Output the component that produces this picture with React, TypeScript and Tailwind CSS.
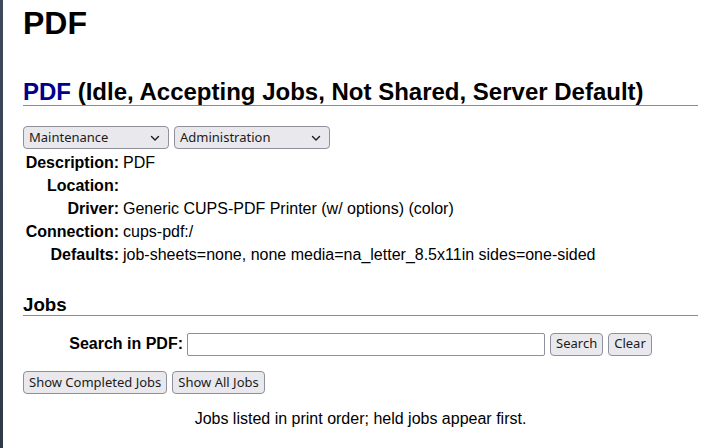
import React from "react";

const ctl = "font-['Noto_Sans',sans-serif] text-[13px] text-[#1b1b1b] bg-[#e9e9ed] border border-[#8f8f9d] rounded-[4px]";

function Select({ label, w }: { label: string; w: string }) {
  return (
    <div className={`${ctl} ${w} h-[23px] flex items-center justify-between pl-[5px] pr-[8px]`}>
      <span>{label}</span>
      <svg width="10" height="10" viewBox="0 0 10 10" fill="none">
        <path d="M1.5 3.5 L5 7 L8.5 3.5" stroke="#1b1b1b" strokeWidth="1.4" strokeLinecap="round" strokeLinejoin="round" />
      </svg>
    </div>
  );
}

function Btn({ label }: { label: string }) {
  return (
    <div className={`${ctl} h-[23px] flex items-center px-[5px] whitespace-nowrap`}>{label}</div>
  );
}

function Row({ k, v }: { k: string; v: string }) {
  return (
    <div className="flex h-[23px] items-center">
      <div className="w-[96px] text-right font-bold">{k}</div>
      <div className="pl-[4px]">{v}</div>
    </div>
  );
}

export default function App() {
  return (
    <div className="flex min-h-[448px] bg-white font-['Liberation_Sans',Arial,sans-serif] text-[16px] text-black">
      <div className="w-[3px] shrink-0 bg-gradient-to-b from-[#3e4a5a] to-[#2f3a48]" />
      <div className="flex-1 pl-[20px] pr-[9px]">
        <h1 className="text-[32px] font-bold leading-[37px] mt-[5px]">PDF</h1>
        <h2 className="mt-[36px] text-[24px] font-bold leading-[27px] border-b border-[#8c8c8c]">
          <span className="text-[#00008b]">PDF</span> (Idle, Accepting Jobs, Not Shared, Server Default)
        </h2>
        <div className="mt-[20px] flex gap-[5px]">
          <Select label="Maintenance" w="w-[146px]" />
          <Select label="Administration" w="w-[156px]" />
        </div>
        <div className="mt-[2px]">
          <Row k="Description:" v="PDF" />
          <Row k="Location:" v="" />
          <Row k="Driver:" v="Generic CUPS-PDF Printer (w/ options) (color)" />
          <Row k="Connection:" v="cups-pdf:/" />
          <Row k="Defaults:" v="job-sheets=none, none media=na_letter_8.5x11in sides=one-sided" />
        </div>
        <h3 className="mt-[29px] text-[18.72px] font-bold leading-[20px] border-b border-[#8c8c8c]">Jobs</h3>
        <div className="mt-[16px] flex justify-center items-center">
          <span className="font-bold mr-[4px]">Search in PDF:</span>
          <div className="w-[358px] h-[23px] border border-[#8f8f9d] rounded-[2px] bg-white" />
          <div className="ml-[5px] flex gap-[5px]">
            <Btn label="Search" />
            <Btn label="Clear" />
          </div>
        </div>
        <div className="mt-[15px] flex gap-[5px]">
          <Btn label="Show Completed Jobs" />
          <Btn label="Show All Jobs" />
        </div>
        <p className="mt-[16px] text-center leading-[18px]">Jobs listed in print order; held jobs appear first.</p>
      </div>
    </div>
  );
}
